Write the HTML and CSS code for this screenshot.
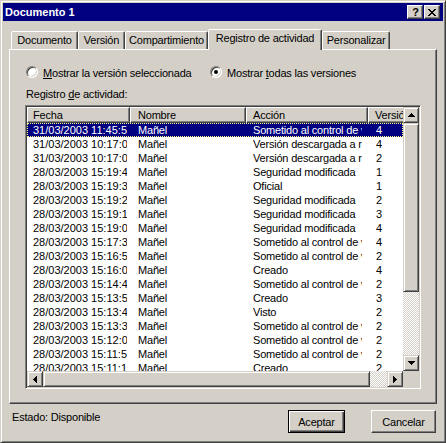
FILE: index.html
```html
<!DOCTYPE html>
<html lang="es">
<head>
<meta charset="utf-8">
<title>Documento 1</title>
<link rel="stylesheet" href="styles.css">
</head>
<body>
<div class="window">
  <div class="titlebar">
    <span class="title">Documento 1</span>
    <div class="tb-buttons">
      <span class="tb-btn help">?</span>
      <span class="tb-btn close"><svg width="8" height="7" viewBox="0 0 8 7"><path d="M0 0h2v1h1v1h2V1h1V0h2v1H7v1H6v1H5v1h1v1h1v1h1v1H6V6H5V5H3v1H2v1H0V6h1V5h1V4h1V3H2V2H1V1H0z"/></svg></span>
    </div>
  </div>
  <div class="body">
    <div class="tabs">
      <div class="tab t-doc">Documento</div>
      <div class="tab t-ver">Versión</div>
      <div class="tab t-comp">Compartimiento</div>
      <div class="tab t-reg sel">Registro de actividad</div>
      <div class="tab t-pers">Personalizar</div>
    </div>
    <div class="panel">
      <div class="options">
        <div class="opt opt1"><span class="radio"></span><span class="opt-text"><u>M</u>ostrar la versión seleccionada</span></div>
        <div class="opt"><span class="radio checked"></span><span class="opt-text">Mostrar <u>t</u>odas las versiones</span></div>
      </div>
      <div class="list-label">Registro <u>d</u>e actividad:</div>
      <div class="listview">
        <div class="lv-main">
          <div class="lv-content">
            <div class="lv-header">
              <div class="hcell h1">Fecha</div>
              <div class="hcell h2">Nombre</div>
              <div class="hcell h3">Acción</div>
              <div class="hcell h4">Versión</div>
            </div>
            <div class="lv-rows">
              <div class="row sel"><span class="c c1">31/03/2003 11:45:58</span><span class="c c2">Mañel</span><span class="c c3">Sometido al control de versiones</span><span class="c c4">4</span></div>
              <div class="row"><span class="c c1">31/03/2003 10:17:02</span><span class="c c2">Mañel</span><span class="c c3">Versión descargada a red local</span><span class="c c4">4</span></div>
              <div class="row"><span class="c c1">31/03/2003 10:17:01</span><span class="c c2">Mañel</span><span class="c c3">Versión descargada a red local</span><span class="c c4">2</span></div>
              <div class="row"><span class="c c1">28/03/2003 15:19:40</span><span class="c c2">Mañel</span><span class="c c3">Seguridad modificada</span><span class="c c4">1</span></div>
              <div class="row"><span class="c c1">28/03/2003 15:19:38</span><span class="c c2">Mañel</span><span class="c c3">Oficial</span><span class="c c4">1</span></div>
              <div class="row"><span class="c c1">28/03/2003 15:19:20</span><span class="c c2">Mañel</span><span class="c c3">Seguridad modificada</span><span class="c c4">2</span></div>
              <div class="row"><span class="c c1">28/03/2003 15:19:10</span><span class="c c2">Mañel</span><span class="c c3">Seguridad modificada</span><span class="c c4">3</span></div>
              <div class="row"><span class="c c1">28/03/2003 15:19:05</span><span class="c c2">Mañel</span><span class="c c3">Seguridad modificada</span><span class="c c4">4</span></div>
              <div class="row"><span class="c c1">28/03/2003 15:17:30</span><span class="c c2">Mañel</span><span class="c c3">Sometido al control de versiones</span><span class="c c4">4</span></div>
              <div class="row"><span class="c c1">28/03/2003 15:16:50</span><span class="c c2">Mañel</span><span class="c c3">Sometido al control de versiones</span><span class="c c4">2</span></div>
              <div class="row"><span class="c c1">28/03/2003 15:16:02</span><span class="c c2">Mañel</span><span class="c c3">Creado</span><span class="c c4">4</span></div>
              <div class="row"><span class="c c1">28/03/2003 15:14:44</span><span class="c c2">Mañel</span><span class="c c3">Sometido al control de versiones</span><span class="c c4">2</span></div>
              <div class="row"><span class="c c1">28/03/2003 15:13:50</span><span class="c c2">Mañel</span><span class="c c3">Creado</span><span class="c c4">3</span></div>
              <div class="row"><span class="c c1">28/03/2003 15:13:40</span><span class="c c2">Mañel</span><span class="c c3">Visto</span><span class="c c4">2</span></div>
              <div class="row"><span class="c c1">28/03/2003 15:13:30</span><span class="c c2">Mañel</span><span class="c c3">Sometido al control de versiones</span><span class="c c4">2</span></div>
              <div class="row"><span class="c c1">28/03/2003 15:12:00</span><span class="c c2">Mañel</span><span class="c c3">Sometido al control de versiones</span><span class="c c4">2</span></div>
              <div class="row"><span class="c c1">28/03/2003 15:11:55</span><span class="c c2">Mañel</span><span class="c c3">Sometido al control de versiones</span><span class="c c4">2</span></div>
              <div class="row"><span class="c c1">28/03/2003 15:11:10</span><span class="c c2">Mañel</span><span class="c c3">Creado</span><span class="c c4">2</span></div>
            </div>
          </div>
          <div class="vscroll">
            <div class="sbtn"><svg width="7" height="4" viewBox="0 0 7 4"><path d="M3 0h1v1h1v1h1v1h1v1H0V3h1V2h1V1h1z"/></svg></div>
            <div class="thumb thumb-v"></div>
            <div class="track"></div>
            <div class="sbtn"><svg width="7" height="4" viewBox="0 0 7 4"><path d="M0 0h7v1H6v1H5v1H4v1H3V3H2V2H1V1H0z"/></svg></div>
          </div>
        </div>
        <div class="lv-bottom">
          <div class="hscroll">
            <div class="sbtn"><svg width="4" height="7" viewBox="0 0 4 7"><path d="M3 0h1v7H3V6H2V5H1V4H0V3h1V2h1V1h1z"/></svg></div>
            <div class="thumb thumb-h"></div>
            <div class="track"></div>
            <div class="sbtn"><svg width="4" height="7" viewBox="0 0 4 7"><path d="M0 0h1v1h1v1h1v1h1v1H3v1H2v1H1v1H0z"/></svg></div>
          </div>
          <div class="corner"></div>
        </div>
      </div>
    </div>
    <div class="footer">
      <span class="status">Estado: Disponible</span>
      <button class="btn btn-ok">Aceptar</button>
      <button class="btn btn-cancel">Cancelar</button>
    </div>
  </div>
</div>
</body>
</html>
```
FILE: styles.css
```css
* { box-sizing: border-box; }
html, body { margin: 0; padding: 0; }
body {
  background: #D4D0C8;
  font-family: "Liberation Sans", Arial, sans-serif;
  font-size: 11px;
  color: #000;
  letter-spacing: -0.2px;
}
u { text-decoration: underline; text-underline-offset: 1px; }

.window {
  width: 446px;
  height: 443px;
  background: #D4D0C8;
  border: 1px solid;
  border-color: #D4D0C8 #404040 #404040 #D4D0C8;
  box-shadow: inset 1px 1px #fff, inset -1px -1px #808080;
  padding: 2px;
  display: flex;
  flex-direction: column;
}

.titlebar {
  height: 18px;
  flex-shrink: 0;
  background: #000080;
  display: flex;
  align-items: center;
  padding: 0 3px 0 2px;
}
.title {
  flex: 1;
  color: #fff;
  font-weight: bold;
  line-height: 18px;
  letter-spacing: 0;
}
.tb-buttons { display: flex; gap: 1px; }
.tb-btn {
  width: 16px;
  height: 14px;
  background: #D4D0C8;
  border: 1px solid;
  border-color: #fff #404040 #404040 #fff;
  box-shadow: inset -1px -1px #808080;
  display: flex;
  align-items: center;
  justify-content: center;
}
.help { font-weight: bold; font-size: 11px; line-height: 12px; letter-spacing: 0; padding-left: 1px; }
.tb-btn svg { display: block; fill: #000; }

.body {
  flex: 1;
  padding: 0 6px;
  display: flex;
  flex-direction: column;
}

.tabs {
  display: flex;
  align-items: flex-end;
  height: 28px;
  padding: 8px 0 0 2px;
  flex-shrink: 0;
}
.tab {
  height: 18px;
  background: #D4D0C8;
  border: 1px solid;
  border-bottom: none;
  border-color: #fff #404040 transparent #fff;
  box-shadow: inset -1px 0 #808080;
  border-radius: 2px 2px 0 0;
  text-align: center;
  line-height: 17px;
  white-space: nowrap;
  flex-shrink: 0;
}
.tab.sel {
  height: 21px;
  margin-bottom: -1px;
  position: relative;
  z-index: 1;
}
.t-doc { width: 67px; }
.t-ver { width: 47px; }
.t-comp { width: 83px; }
.t-reg { width: 114px; }
.t-pers { width: 68px; }

.panel {
  height: 355px;
  flex-shrink: 0;
  border: 1px solid;
  border-color: #fff #404040 #404040 #fff;
  box-shadow: inset -1px -1px #808080;
}

.options {
  display: flex;
  align-items: center;
  height: 16px;
  margin-top: 14px;
  padding-left: 16px;
}
.opt { display: flex; align-items: center; gap: 5px; }
.opt1 { width: 184px; }
.opt-text { padding-top: 2px; white-space: nowrap; }
.radio {
  width: 12px;
  height: 12px;
  flex-shrink: 0;
  border-radius: 50%;
  background: #fff;
  border: 1px solid;
  border-color: #808080 #fff #fff #808080;
  box-shadow: inset 1px 1px #404040, inset -1px -1px #D4D0C8;
  position: relative;
}
.radio.checked::after {
  content: "";
  position: absolute;
  left: 3px;
  top: 3px;
  width: 4px;
  height: 4px;
  border-radius: 50%;
  background: #000;
}

.list-label {
  margin-top: 8px;
  line-height: 13px;
  padding-left: 16px;
}

.listview {
  margin: 4px 0 0 15px;
  width: 396px;
  height: 284px;
  border: 1px solid;
  border-color: #808080 #fff #fff #808080;
  box-shadow: inset 1px 1px #404040, inset -1px -1px #D4D0C8;
  padding: 1px;
  background: #fff;
  display: flex;
  flex-direction: column;
}
.lv-main { display: flex; height: 264px; }
.lv-content { width: 376px; overflow: hidden; background: #fff; }
.lv-header { display: flex; height: 16px; background: #D4D0C8; }
.hcell {
  flex-shrink: 0;
  height: 16px;
  border: 1px solid;
  border-color: #fff #404040 #404040 #fff;
  box-shadow: inset -1px -1px #808080;
  line-height: 14px;
  white-space: nowrap;
  overflow: hidden;
}
.h1 { width: 103px; padding-left: 5px; }
.h2 { width: 116px; padding-left: 7px; }
.h3 { width: 122px; padding-left: 6px; }
.h4 { width: 80px; padding-left: 6px; }

.lv-rows { height: 248px; overflow: hidden; }
.row {
  display: flex;
  height: 14px;
  line-height: 14px;
  white-space: nowrap;
}
.row.sel {
  background: #000080;
  color: #fff;
  outline: 1px dotted #ffff80;
  outline-offset: -1px;
}
.c { flex-shrink: 0; overflow: hidden; }
.c1 { margin-left: 6px; width: 94px; margin-right: 3px; letter-spacing: 0; }
.c2 { margin-left: 8px; width: 104px; margin-right: 4px; }
.c3 { margin-left: 7px; width: 109px; margin-right: 6px; }
.c4 { margin-left: 8px; width: 40px; }

.vscroll { width: 16px; display: flex; flex-direction: column; }
.hscroll { width: 376px; display: flex; }
.sbtn, .thumb {
  flex-shrink: 0;
  background: #D4D0C8;
  border: 1px solid;
  border-color: #D4D0C8 #404040 #404040 #D4D0C8;
  box-shadow: inset 1px 1px #fff, inset -1px -1px #808080;
}
.sbtn {
  width: 16px;
  height: 16px;
  display: flex;
  align-items: center;
  justify-content: center;
}
.sbtn svg { display: block; fill: #000; }
.thumb-v { height: 169px; }
.thumb-h { width: 327px; height: 16px; }
.track {
  flex: 1;
  background: repeating-conic-gradient(#fff 0 25%, #D4D0C8 0 50%) 0 0 / 2px 2px;
}
.lv-bottom { display: flex; height: 16px; }
.corner { width: 16px; background: #D4D0C8; }

.footer {
  display: flex;
  align-items: flex-start;
  margin-top: 6px;
  padding-left: 3px;
}
.status { flex: 1; padding-top: 1px; line-height: 13px; }
.btn {
  height: 23px;
  font: inherit;
  letter-spacing: inherit;
  color: #000;
  background: #D4D0C8;
  border: 1px solid;
  border-color: #fff #404040 #404040 #fff;
  box-shadow: inset -1px -1px #808080;
  padding: 0;
}
.btn-ok {
  width: 57px;
  margin-right: 26px;
  border-color: #000;
  box-shadow: inset 1px 1px #fff, inset -1px -1px #404040, inset -2px -2px #808080;
}
.btn-cancel { width: 65px; margin-right: 1px; }
```
